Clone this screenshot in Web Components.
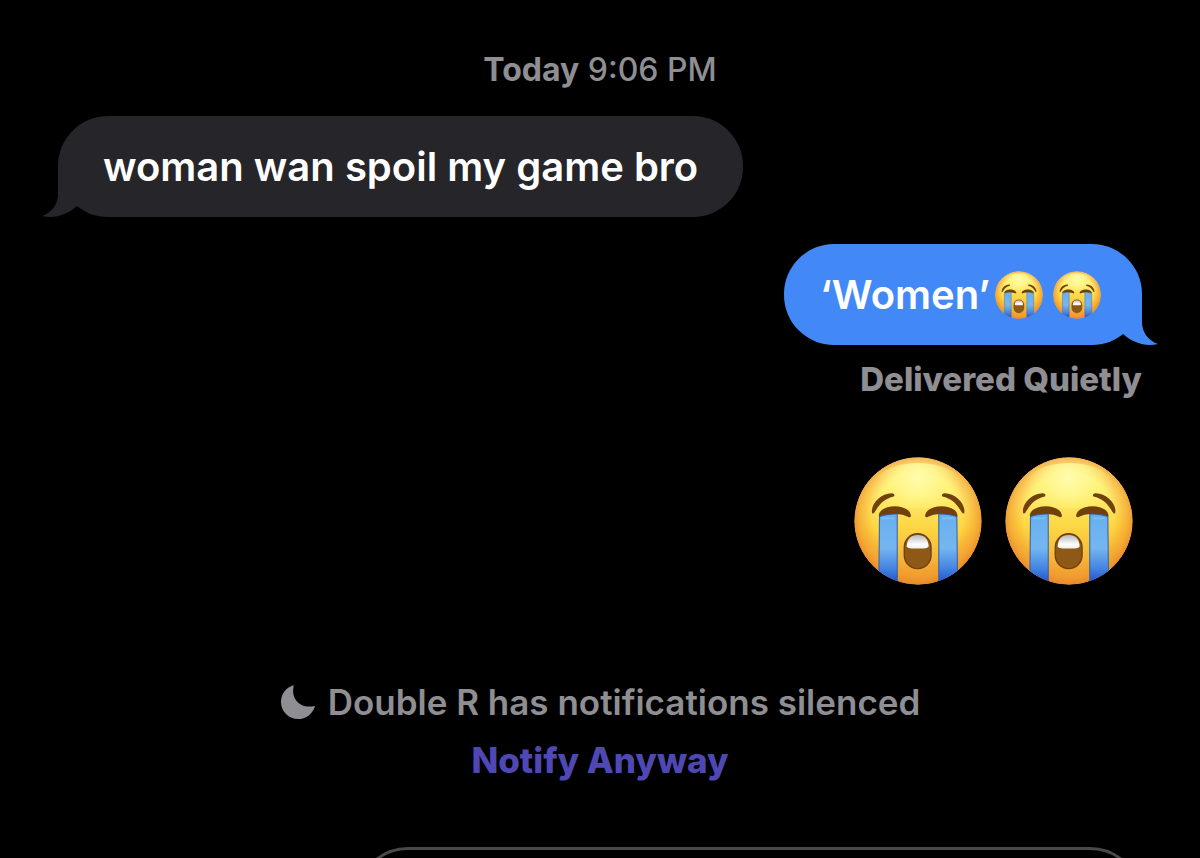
<!DOCTYPE html>
<html lang="en">
<head>
<meta charset="utf-8">
<meta name="viewport" content="width=device-width, initial-scale=1">
<title>Messages</title>
<style>
html, body { margin: 0; background: #000; }
body { font-family: Inter, "Liberation Sans", sans-serif; color: #8e8e93; }
</style>
</head>
<body>
<chat-thread>
  <time-stamp day="Today">9:06 PM</time-stamp>
  <chat-bubble>woman wan spoil my game bro</chat-bubble>
  <chat-bubble sent>‘Women’<crying-face></crying-face><crying-face></crying-face></chat-bubble>
  <delivery-status>Delivered Quietly</delivery-status>
  <big-emoji><crying-face></crying-face><crying-face></crying-face></big-emoji>
  <focus-notice action="Notify Anyway">Double R has notifications silenced</focus-notice>
  <message-composer></message-composer>
</chat-thread>
<script>
class Base extends HTMLElement {
  constructor() {
    super();
    this.attachShadow({ mode: 'open' }).innerHTML = this.constructor.markup;
  }
}

customElements.define('chat-thread', class extends Base {
  static markup = `
    <style>
      :host { display: block; height: 100vh; overflow: hidden; background: #000; }
      main { display: flex; flex-direction: column; align-items: flex-start; padding: 50px 58px 0; }
    </style>
    <main><slot></slot></main>`;
});

customElements.define('time-stamp', class extends Base {
  static markup = `
    <style>
      :host { display: block; align-self: center; font-size: 32px; font-weight: 500; line-height: 40px; margin-bottom: 26px; }
      b { font-weight: 700; }
    </style>
    <time><b></b> <slot></slot></time>`;
  connectedCallback() {
    this.shadowRoot.querySelector('b').textContent = this.getAttribute('day');
  }
});

customElements.define('chat-bubble', class extends Base {
  static markup = `
    <style>
      :host { display: block; position: relative; box-sizing: border-box; padding: 26px 45px; border-radius: 50px;
        background: #26252a; color: #fff; font-size: 40px; font-weight: 600; line-height: 49px; margin-bottom: 27px; }
      :host([sent]) { align-self: flex-end; background: #4289f7; padding: 26px 36px; margin-bottom: 14px; }
      svg { position: absolute; left: -16px; bottom: 0; width: 40px; height: 56px; fill: #26252a; }
      :host([sent]) svg { left: auto; right: -16px; transform: scaleX(-1); fill: #4289f7; }
      p { display: flex; align-items: center; margin: 0; }
    </style>
    <p><slot></slot></p>
    <svg viewBox="0 0 40 56" aria-hidden="true"><path d="M16 5V33C16 44 9 52 0 55C12 58 25 54 35 45L40 30Z"/></svg>`;
});

let faceCount = 0;
customElements.define('crying-face', class extends HTMLElement {
  constructor() {
    super();
    const n = ++faceCount;
    this.attachShadow({ mode: 'open' }).innerHTML = `
    <style>
      :host { display: block; width: 48px; height: 48px; margin: 0 5px; }
      svg { display: block; width: 100%; height: 100%; }
    </style>
    <svg viewBox="43 39 382 382" role="img" aria-label="Loudly crying face">
      <defs>
        <radialGradient id="edge${n}" cx="234" cy="220" r="202" gradientUnits="userSpaceOnUse">
          <stop offset=".66" stop-color="#f59a22" stop-opacity="0"/>
          <stop offset=".86" stop-color="#f19a2c" stop-opacity=".6"/>
          <stop offset="1" stop-color="#e8852b"/>
        </radialGradient>
        <linearGradient id="skin${n}" x2="0" y2="1">
          <stop offset="0" stop-color="#fff9a8"/><stop offset=".25" stop-color="#fff079"/>
          <stop offset=".55" stop-color="#fdd643"/><stop offset="1" stop-color="#f09a34"/>
        </linearGradient>
        <radialGradient id="shine${n}" cx="234" cy="100" r="130" gradientUnits="userSpaceOnUse">
          <stop offset="0" stop-color="#fffcae"/><stop offset=".4" stop-color="#fff894" stop-opacity=".8"/><stop offset="1" stop-color="#fff26a" stop-opacity="0"/>
        </radialGradient>
        <linearGradient id="tear${n}" x1="0" y1="210" x2="0" y2="410" gradientUnits="userSpaceOnUse">
          <stop offset="0" stop-color="#68aff0"/><stop offset=".5" stop-color="#75b6f0"/><stop offset=".8" stop-color="#4685e2"/><stop offset="1" stop-color="#2458cb"/>
        </linearGradient>
        <linearGradient id="teeth${n}" x2="0" y2="1">
          <stop offset="0" stop-color="#b9b9bc"/><stop offset=".7" stop-color="#fff"/><stop offset="1" stop-color="#eee"/>
        </linearGradient>
        <clipPath id="face${n}"><circle cx="234" cy="230" r="190"/></clipPath>
      </defs>
      <g clip-path="url(#face${n})">
        <circle cx="234" cy="230" r="190" fill="url(#skin${n})"/>
        <circle cx="234" cy="230" r="190" fill="url(#edge${n})"/>
        <ellipse cx="234" cy="125" rx="132" ry="68" fill="url(#shine${n})"/>
        <g fill="#70410d">
          <path d="M97 206C92 180 122 146 157 147Q167 150 162 157C134 163 118 180 104 205Q100 210 97 206Z"/>
          <path d="M372 206C377 180 347 146 312 147Q302 150 307 157C335 163 351 180 365 205Q369 210 372 206Z"/>
          <path d="M117 215C118 176 211 176 213 215Q211 221 204 217Q184 207 160 210L120 219Z"/>
          <path d="M352 215C351 176 258 176 255 215Q257 221 264 217Q284 207 308 210L349 219Z"/>
        </g>
        <g fill="url(#tear${n})" stroke="#315fa6" stroke-width="3">
          <path d="M119 217Q140 208 172 209V425H117Z"/>
          <path d="M350 217Q329 208 296 209V425H352Z"/>
        </g>
        <path d="M126 222H163M306 222H343" stroke="#8dc8fa" stroke-width="5" opacity=".6"/>
        <rect x="193" y="268" width="80" height="104" rx="40" fill="#8e5917" stroke="#70410d" stroke-width="4"/>
        <path d="M200 307C201 283 214 272 233 272S265 283 266 307Q261 312 252 312H214Q204 312 200 307Z" fill="url(#teeth${n})"/>
      </g>
    </svg>`;
  }
});

customElements.define('delivery-status', class extends Base {
  static markup = `
    <style>:host { display: block; align-self: flex-end; font-size: 33px; font-weight: 800; line-height: 40px; margin-bottom: 58px; }</style>
    <slot></slot>`;
});

customElements.define('big-emoji', class extends Base {
  static markup = `
    <style>
      :host { display: flex; align-self: flex-end; gap: 23px; padding-right: 9px; margin-bottom: 95px; }
      ::slotted(*) { width: 128px !important; height: 128px !important; margin: 0 !important; }
    </style>
    <slot></slot>`;
});

customElements.define('focus-notice', class extends Base {
  static markup = `
    <style>
      :host { display: flex; flex-direction: column; align-items: center; align-self: center; gap: 14px; font-size: 35px; font-weight: 600; line-height: 44px; margin-bottom: 65px; }
      p { display: flex; align-items: center; gap: 12px; margin: 0; }
      svg { width: 36px; height: 36px; fill: #8e8e93; }
      button { appearance: none; border: 0; background: none; padding: 0; font: inherit; font-weight: 800; color: #4f48b4; cursor: pointer; }
    </style>
    <p><svg viewBox="0 0 36 36" aria-hidden="true"><path d="M12.5 1.6Q13.8 .8 13.6 2.4C11 14 19 24.5 33.5 22.2Q35.4 21.8 34.6 23.4C31.8 30.6 25.7 35 18.3 35C8.6 35 1 27.5 1 18C1 10.5 5.6 4.2 12.5 1.6Z"/></svg><span><slot></slot></span></p>
    <button type="button"></button>`;
  connectedCallback() {
    this.shadowRoot.querySelector('button').textContent = this.getAttribute('action');
  }
});

customElements.define('message-composer', class extends Base {
  static markup = `
    <style>
      :host { display: block; align-self: stretch; padding-left: 298px; }
      input { display: block; box-sizing: border-box; width: 100%; height: 104px; border: 3px solid #4a4a4c; border-radius: 52px; background: #000; color: #fff; padding: 0 36px; font: inherit; font-size: 40px; outline: 0; }
    </style>
    <input type="text" aria-label="Message">`;
});
</script>
</body>
</html>
